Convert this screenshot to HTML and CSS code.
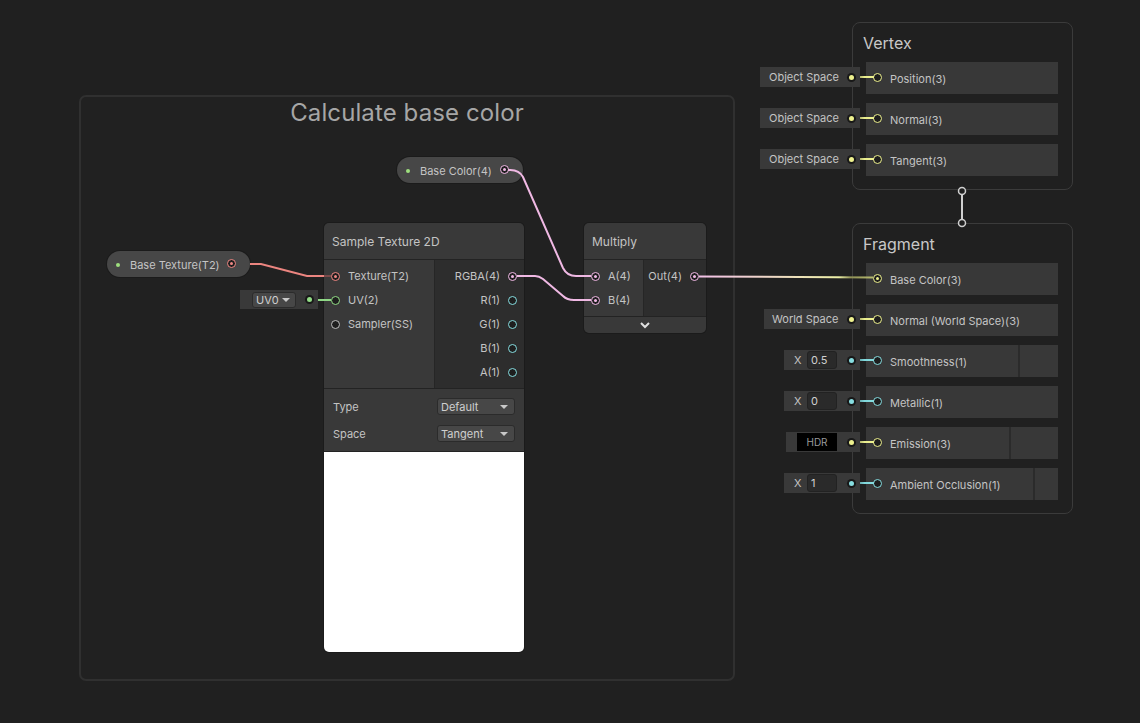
FILE: index.html
```html
<!DOCTYPE html>
<html>
<head>
<meta charset="utf-8">
<link rel="stylesheet" href="styles.css">
</head>
<body>
<div class="canvas">
  <div class="group">
    <div class="group-title">Calculate base color</div>
  </div>

  <div class="pill pill-color">
    <span class="pdot"></span><span class="lbl">Base Color(4)</span><span class="port pink on"></span>
  </div>
  <div class="pill pill-tex">
    <span class="pdot"></span><span class="lbl">Base Texture(T2)</span><span class="port red on"></span>
  </div>

  <div class="node node-sample">
    <div class="node-title">Sample Texture 2D</div>
    <div class="node-ports">
      <div class="inputs in-sample">
        <div class="slot"><span class="port red on"></span><span>Texture(T2)</span></div>
        <div class="slot"><span class="port green"></span><span>UV(2)</span></div>
        <div class="slot"><span class="port grey"></span><span>Sampler(SS)</span></div>
      </div>
      <div class="outputs">
        <div class="slot"><span>RGBA(4)</span><span class="port pink on"></span></div>
        <div class="slot"><span>R(1)</span><span class="port cyan"></span></div>
        <div class="slot"><span>G(1)</span><span class="port cyan"></span></div>
        <div class="slot"><span>B(1)</span><span class="port cyan"></span></div>
        <div class="slot"><span>A(1)</span><span class="port cyan"></span></div>
      </div>
    </div>
    <div class="node-props">
      <div class="prop"><span>Type</span><div class="dropdown">Default<i class="caret"></i></div></div>
      <div class="prop"><span>Space</span><div class="dropdown">Tangent<i class="caret"></i></div></div>
    </div>
    <div class="preview"></div>
  </div>

  <div class="node node-mul">
    <div class="node-title">Multiply</div>
    <div class="node-ports ports-mul">
      <div class="inputs in-mul">
        <div class="slot"><span class="port pink on"></span><span>A(4)</span></div>
        <div class="slot"><span class="port pink on"></span><span>B(4)</span></div>
      </div>
      <div class="outputs">
        <div class="slot"><span>Out(4)</span><span class="port pink on"></span></div>
      </div>
    </div>
    <div class="collapse">
      <svg width="12" height="8" viewBox="0 0 12 8"><polyline points="2,2 6,6 10,2" fill="none" stroke="#e0e0e0" stroke-width="2"/></svg>
    </div>
  </div>

  <div class="context ctx-vertex">
    <div class="ctx-title">Vertex</div>
    <div class="block"><span class="port yellow"></span><span>Position(3)</span></div>
    <div class="block"><span class="port yellow"></span><span>Normal(3)</span></div>
    <div class="block"><span class="port yellow"></span><span>Tangent(3)</span></div>
  </div>

  <div class="context ctx-frag">
    <div class="ctx-title">Fragment</div>
    <div class="block"><span class="port yellow on"></span><span>Base Color(3)</span></div>
    <div class="block"><span class="port yellow"></span><span>Normal (World Space)(3)</span></div>
    <div class="block"><span class="port cyan"></span><span>Smoothness(1)</span><span class="ctrl ctrl-smooth"></span></div>
    <div class="block"><span class="port cyan"></span><span>Metallic(1)</span></div>
    <div class="block"><span class="port yellow"></span><span>Emission(3)</span><span class="ctrl ctrl-emis"></span></div>
    <div class="block"><span class="port cyan"></span><span>Ambient Occlusion(1)</span><span class="ctrl ctrl-ao"></span></div>
  </div>

  <svg class="wires" width="1140" height="723" viewBox="0 0 1140 723">
    <defs>
      <linearGradient id="outgrad" x1="698" y1="0" x2="874" y2="0" gradientUnits="userSpaceOnUse">
        <stop offset="0" stop-color="#f2c0e8"/>
        <stop offset="0.8" stop-color="#ecefa6"/>
        <stop offset="0.87" stop-color="#8f9056"/>
        <stop offset="1" stop-color="#b9bd70"/>
      </linearGradient>
      <linearGradient id="yl" x1="855" y1="0" x2="874" y2="0" gradientUnits="userSpaceOnUse">
        <stop offset="0" stop-color="#77784a"/>
        <stop offset="0.5" stop-color="#e8ec8e"/>
        <stop offset="1" stop-color="#eef18e"/>
      </linearGradient>
      <linearGradient id="cy" x1="855" y1="0" x2="874" y2="0" gradientUnits="userSpaceOnUse">
        <stop offset="0" stop-color="#4c7a7c"/>
        <stop offset="0.5" stop-color="#80d8dc"/>
        <stop offset="1" stop-color="#86dde0"/>
      </linearGradient>
    </defs>
    <path d="M250 264 L261 264 L307 276 L324 276" fill="none" stroke="#ec8580" stroke-width="2"/>
    <path d="M324 276 L331 276" fill="none" stroke="#7a4a4a" stroke-width="2"/>
    <path d="M313 300 L331 300" fill="none" stroke="#8fd886" stroke-width="2"/>
    <path d="M508 170 Q519 169 523 177 L563 268 Q567 276 576 276 L591 276" fill="none" stroke="#f0b9e4" stroke-width="2"/>
    <path d="M517 276 L535 276 Q539 276 543 279 L563 296 Q567 300 574 300 L591 300" fill="none" stroke="#f0b9e4" stroke-width="2"/>
    <path d="M699 276.5 L873 277.5" fill="none" stroke="url(#outgrad)" stroke-width="2"/>
    <g stroke-width="2" fill="none">
      <path d="M855 77 L874 77" stroke="url(#yl)"/>
      <path d="M855 118 L874 118" stroke="url(#yl)"/>
      <path d="M855 159 L874 159" stroke="url(#yl)"/>
      <path d="M855 319 L874 319" stroke="url(#yl)"/>
      <path d="M855 360 L874 360" stroke="url(#cy)"/>
      <path d="M855 401 L874 401" stroke="url(#cy)"/>
      <path d="M855 442 L874 442" stroke="url(#yl)"/>
      <path d="M855 483 L874 483" stroke="url(#cy)"/>
    </g>
    <path d="M962 195 L962 219" stroke="#d0d0d0" stroke-width="2"/>
    <circle cx="962" cy="191" r="3.5" fill="#202020" stroke="#d0d0d0" stroke-width="1.5"/>
    <circle cx="962" cy="223" r="3.5" fill="#202020" stroke="#d0d0d0" stroke-width="1.5"/>
  </svg>

  <div class="field field-uv">
    <div class="mini-dd">UV0<i class="caret"></i></div>
    <span class="fdot green"></span>
  </div>

  <div class="field field-os f-pos"><span>Object Space</span><span class="fdot yellow"></span></div>
  <div class="field field-os f-nrm"><span>Object Space</span><span class="fdot yellow"></span></div>
  <div class="field field-os f-tan"><span>Object Space</span><span class="fdot yellow"></span></div>

  <div class="field field-ws"><span>World Space</span><span class="fdot yellow"></span></div>
  <div class="field field-x f-smooth"><span class="xl">X</span><span class="num">0.5</span><span class="fdot cyan"></span></div>
  <div class="field field-x f-metal"><span class="xl">X</span><span class="num">0</span><span class="fdot cyan"></span></div>
  <div class="field field-hdr"><span class="hdr">HDR</span><span class="fdot yellow"></span></div>
  <div class="field field-x f-ao"><span class="xl">X</span><span class="num">1</span><span class="fdot cyan"></span></div>
</div>
</body>
</html>
```
FILE: styles.css
```css
* { box-sizing: border-box; }
html, body { margin: 0; padding: 0; background: #202020; }
body {
  font-family: Inter, "Noto Sans", "Liberation Sans", sans-serif;
  font-size: 11px;
  color: #c4c4c4;
}
.canvas {
  position: relative;
  width: 1140px;
  height: 723px;
  overflow: hidden;
  background: #202020;
}

/* group */
.group {
  position: absolute;
  left: 79px;
  top: 95px;
  width: 656px;
  height: 586px;
  border: 2px solid #303030;
  border-radius: 7px;
  background: #212121;
}
.group-title {
  margin-top: 1px;
  text-align: center;
  font-size: 24px;
  line-height: 30px;
  color: #a6a6a6;
  letter-spacing: 0.1px;
}

.wires { position: absolute; left: 0; top: 0; pointer-events: none; }

/* ports */
.port {
  flex: none;
  position: relative;
  width: 9px;
  height: 9px;
  border-radius: 50%;
  border: 1.6px solid currentColor;
  background: #1e1e1e;
}
.port.on::after {
  content: "";
  position: absolute;
  left: 50%;
  top: 50%;
  width: 3px;
  height: 3px;
  margin: -1.5px 0 0 -1.5px;
  border-radius: 50%;
  background: currentColor;
}
.pink { color: #f2b9e6; }
.red { color: #f08884; }
.green { color: #92dc86; }
.cyan { color: #86dde0; }
.yellow { color: #eef18e; }
.grey { color: #bdbdbd; }

/* property pills */
.pill {
  position: absolute;
  height: 26px;
  border-radius: 13px;
  background: #474747;
  display: flex;
  align-items: center;
  padding: 1px 15px 0 9px;
  box-shadow: 0 0 0 1px #1b1b1b;
}
.pill .pdot {
  width: 4px;
  height: 4px;
  border-radius: 50%;
  background: #9ee07e;
  margin-right: 10px;
  flex: none;
}
.pill .lbl { flex: 1; white-space: nowrap; }
.pill .port { margin-right: -0.5px; margin-top: -2px; }
.pill-color { left: 397px; top: 157px; width: 126px; }
.pill-tex { left: 107px; top: 251px; width: 143px; }

/* field boxes */
.field {
  position: absolute;
  height: 20px;
  background: #393939;
  display: flex;
  align-items: center;
  padding: 0 6px 0 9px;
  white-space: nowrap;
}
.fdot {
  margin-left: auto;
  flex: none;
  width: 5px;
  height: 5px;
  border-radius: 50%;
  background: currentColor;
  box-shadow: 0 0 0 2px #181818;
}
.field-uv { left: 240px; top: 290px; width: 78px; height: 19px; padding-left: 12px; }
.mini-dd {
  width: 44px;
  height: 16px;
  background: #474747;
  border: 1px solid #2b2b2b;
  border-radius: 3px;
  display: flex;
  align-items: center;
  justify-content: space-between;
  padding: 0 5px 0 3px;
  font-size: 11px;
  color: #cfcfcf;
}
.caret {
  width: 0;
  height: 0;
  border-left: 4px solid transparent;
  border-right: 4px solid transparent;
  border-top: 4px solid #c8c8c8;
}
.field-os { left: 760px; width: 100px; }
.f-pos { top: 67px; }
.f-nrm { top: 108px; }
.f-tan { top: 149px; }
.field-ws { left: 764px; top: 309px; width: 96px; padding-left: 8px; }
.field-x { left: 784px; width: 76px; padding-left: 10px; }
.f-smooth { top: 350px; }
.f-metal { top: 391px; }
.f-ao { top: 473px; }
.field-x .xl { width: 7px; margin-right: 6px; }
.field-x .num {
  width: 30px;
  height: 18px;
  background: #2a2a2a;
  border: 1px solid #222;
  border-radius: 3px;
  padding-left: 3px;
  line-height: 16px;
  color: #d0d0d0;
}
.field-hdr { left: 786px; top: 432px; width: 74px; padding-left: 11px; }
.field-hdr .hdr {
  width: 40px;
  height: 18px;
  background: #000;
  color: #9a9a9a;
  font-size: 10px;
  line-height: 18px;
  text-align: center;
}

/* nodes */
.node {
  position: absolute;
  top: 223px;
  border-radius: 5px;
  overflow: hidden;
  box-shadow: 0 0 0 1px #1b1b1b;
}
.node-sample { left: 324px; width: 200px; }
.node-mul { left: 584px; width: 122px; }
.node-title {
  height: 37px;
  background: #393939;
  border-bottom: 1px solid #232323;
  padding-left: 8px;
  display: flex;
  align-items: center;
  font-size: 12px;
  color: #c4c4c4;
}
.node-ports {
  display: flex;
  height: 128px;
}
.ports-mul { height: 56px; }
.inputs {
  background: #393939;
  border-right: 1px solid #262626;
  padding-top: 4px;
}
.in-sample { width: 111px; }
.in-mul { width: 60px; }
.outputs {
  flex: 1;
  background: #2d2d2d;
  padding-top: 4px;
}
.slot {
  height: 24px;
  display: flex;
  align-items: center;
  gap: 8px;
  white-space: nowrap;
}
.inputs .slot { padding-left: 7px; }
.outputs .slot { justify-content: flex-end; padding-right: 7px; }

.node-props {
  height: 64px;
  background: #393939;
  border-top: 1px solid #232323;
  border-bottom: 1px solid #232323;
  padding: 4px 9px 0 9px;
}
.prop {
  height: 27px;
  display: flex;
  align-items: center;
  justify-content: space-between;
}
.dropdown {
  width: 78px;
  height: 17px;
  background: #474747;
  border: 1px solid #2b2b2b;
  border-radius: 3px;
  display: flex;
  align-items: center;
  justify-content: space-between;
  padding: 0 6px 0 3px;
  color: #cfcfcf;
}
.preview {
  height: 200px;
  background: #ffffff;
}
.collapse {
  height: 17px;
  background: #393939;
  border-top: 1px solid #232323;
  display: flex;
  align-items: center;
  justify-content: center;
  padding-right: 1px;
}
.collapse svg { display: block; }

/* contexts */
.context {
  position: absolute;
  left: 852px;
  width: 221px;
  border: 1px solid #3b3b3b;
  border-radius: 8px;
  background: #202020;
  padding: 0 14px 13px 13px;
  display: flex;
  flex-direction: column;
  gap: 9px;
}
.ctx-vertex { top: 22px; }
.ctx-frag { top: 223px; }
.ctx-title {
  padding-top: 10px;
  height: 30px;
  line-height: 20px;
  margin-left: -3px;
  font-size: 16px;
  color: #c8c8c8;
}
.block {
  position: relative;
  height: 32px;
  background: #383838;
  display: flex;
  align-items: center;
  gap: 8px;
  padding-left: 7px;
  padding-top: 1px;
  white-space: nowrap;
}
.block .port { margin-top: -2px; }
.ctrl {
  position: absolute;
  top: 0;
  bottom: 0;
  right: 0;
  border-left: 2px solid #2b2b2b;
}
.ctrl-smooth { width: 40px; }
.ctrl-emis { width: 49px; }
.ctrl-ao { width: 25px; }
```
